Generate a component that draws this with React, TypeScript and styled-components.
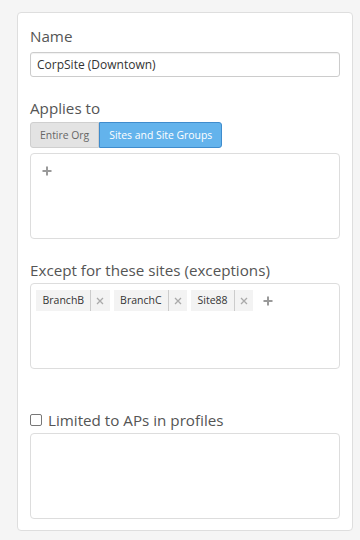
import React from "react";
import styled, { createGlobalStyle } from "styled-components";

const Global = createGlobalStyle`
  html, body { margin: 0; padding: 0; background: #f5f5f5; }
  body { font-family: "Open Sans", "Liberation Sans", sans-serif; }
  * { box-sizing: border-box; }
`;

const Page = styled.div`
  width: 360px;
  height: 540px;
  padding: 12px 7px 0 17px;
  background: #f5f5f5;
`;

const Card = styled.div`
  background: #fff;
  border: 1px solid #dedede;
  border-radius: 4px;
  padding: 12px 12px 11px 12px;
  display: flex;
  flex-direction: column;
`;

const Label = styled.div<{ $top: number; $bottom: number }>`
  font-size: 15.2px;
  line-height: 22px;
  color: #555;
  margin-top: ${(p) => p.$top}px;
  margin-bottom: ${(p) => p.$bottom}px;
  display: flex;
  align-items: center;
  gap: 6px;
`;

const Input = styled.div`
  height: 25px;
  border: 1px solid #ccc;
  border-radius: 3px;
  padding: 0 6px;
  font-size: 12px;
  line-height: 23px;
  color: #333;
  box-shadow: inset 0 1px 1px rgba(0,0,0,0.06);
`;

const BtnGroup = styled.div`
  display: flex;
  margin-bottom: 5px;
`;

const Btn = styled.div<{ $active?: boolean }>`
  height: 26px;
  padding: 0 9px;
  font-size: 10.4px;
  line-height: 24px;
  border: 1px solid ${(p) => (p.$active ? "#3f8ccd" : "#cfcfcf")};
  background: ${(p) => (p.$active ? "#63b3ec" : "#e3e3e3")};
  color: ${(p) => (p.$active ? "#fff" : "#666")};
  border-radius: ${(p) => (p.$active ? "0 3px 3px 0" : "3px 0 0 3px")};
`;

const Box = styled.div`
  height: 86px;
  border: 1px solid #ddd;
  border-radius: 4px;
  padding: 6px 5px;
  display: flex;
  flex-wrap: wrap;
  align-content: flex-start;
  gap: 4px;
`;

const Tag = styled.div`
  height: 21px;
  display: flex;
  align-items: stretch;
  background: #f3f3f3;
  font-size: 10.5px;
  color: #333;
`;

const TagName = styled.span`
  padding: 0 6px 0 6.5px;
  line-height: 21px;
  border-right: 1px solid #ccc;
`;

const TagX = styled.span`
  width: 18.5px;
  display: flex;
  align-items: center;
  justify-content: center;
`;

const Plus = styled.div`
  width: 21px;
  height: 21px;
  display: flex;
  align-items: center;
  justify-content: center;
`;

const Check = styled.span`
  width: 12px;
  height: 12px;
  border: 1px solid #777;
  border-radius: 2px;
  background: #fff;
  flex: none;
`;

const PlusIcon = () => (
  <svg width="10" height="10" viewBox="0 0 10 10">
    <path d="M5 0.5v9M0.5 5h9" stroke="#9a9a9a" strokeWidth="2" />
  </svg>
);

const XIcon = () => (
  <svg width="8" height="8" viewBox="0 0 8 8">
    <path d="M1 1l6 6M7 1l-6 6" stroke="#aaa" strokeWidth="1.3" />
  </svg>
);

const tags = ["BranchB", "BranchC", "Site88"];

export default function App() {
  return (
    <Page>
      <Global />
      <Card>
        <Label $top={0} $bottom={5}>Name</Label>
        <Input>CorpSite (Downtown)</Input>
        <Label $top={20} $bottom={3}>Applies to</Label>
        <BtnGroup>
          <Btn>Entire Org</Btn>
          <Btn $active>Sites and Site Groups</Btn>
        </BtnGroup>
        <Box>
          <Plus><PlusIcon /></Plus>
        </Box>
        <Label $top={20} $bottom={2}>Except for these sites (exceptions)</Label>
        <Box>
          {tags.map((t) => (
            <Tag key={t}>
              <TagName>{t}</TagName>
              <TagX><XIcon /></TagX>
            </Tag>
          ))}
          <Plus><PlusIcon /></Plus>
        </Box>
        <Label $top={40} $bottom={2}><Check />Limited to APs in profiles</Label>
        <Box />
      </Card>
    </Page>
  );
}
